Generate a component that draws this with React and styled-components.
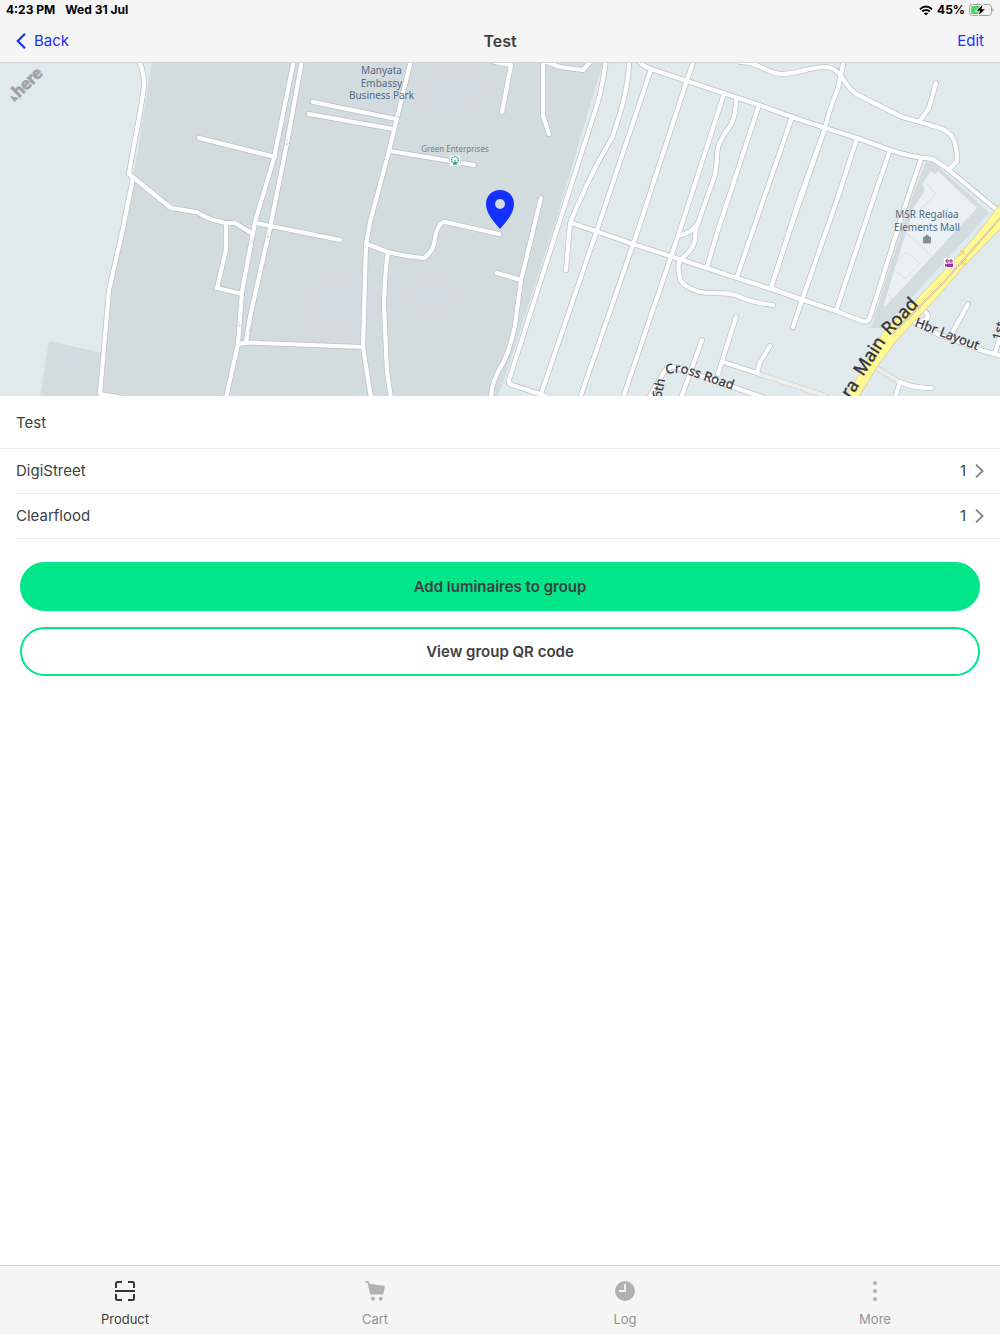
import styled, { createGlobalStyle, css } from "styled-components";

const GlobalStyle = createGlobalStyle`
  * {
    box-sizing: border-box;
  }

  body {
    margin: 0;
    background: #fff;
    color: #3d3f42;
    font-family: Inter, "Liberation Sans", sans-serif;
    font-size: 15px;
    line-height: 20px;
  }

  button {
    margin: 0;
    padding: 0;
    border: 0;
    background: none;
    color: inherit;
    font: inherit;
    cursor: pointer;
  }
`;

const Page = styled.div`
  display: flex;
  flex-direction: column;
  min-height: 100vh;
`;

const Header = styled.header`
  background: #f5f5f5;
  border-bottom: 1px solid #d0d3d4;
`;

const StatusBar = styled.div`
  display: flex;
  justify-content: space-between;
  align-items: center;
  height: 20px;
  padding: 0 6px;
  color: #000;
  font-size: 12px;
  font-weight: 650;
`;

const StatusGroup = styled.div`
  display: flex;
  align-items: center;
  gap: ${(props) => props.$gap}px;
`;

const NavBar = styled.div`
  display: grid;
  grid-template-columns: 1fr auto 1fr;
  align-items: center;
  height: 42px;
  padding: 0 16px;
`;

const NavButton = styled.button`
  display: flex;
  align-items: center;
  gap: 8px;
  justify-self: ${(props) => props.$side};
  color: #1b30f5;
  line-height: 22px;
`;

const Title = styled.h1`
  margin: 0;
  font-size: 16px;
  font-weight: 600;
`;

const MapSvg = styled.svg`
  display: block;
  width: 100%;
  height: auto;
  font-family: "Noto Sans", sans-serif;
`;

const Place = styled.text`
  fill: #526a86;
  font-size: 10px;
  text-anchor: middle;
`;

const PlaceSmall = styled.text`
  fill: #7a7d80;
  font-size: 8px;
  text-anchor: middle;
`;

const Street = styled.text`
  fill: #33333d;
  font-size: ${(props) => (props.$large ? 18 : 13)}px;
  stroke: #33333d;
  stroke-width: ${(props) => (props.$large ? 0.4 : 0.2)};
`;

const HereLogo = styled.text`
  fill: #a1a4a6;
  stroke: #a1a4a6;
  stroke-width: 0.8;
  font-family: Lato, sans-serif;
  font-size: 17px;
  font-weight: 900;
`;

const Main = styled.main`
  flex: 1;
`;

const GroupName = styled.h2`
  margin: 0;
  padding: 17px 16px 15px;
  border-bottom: 1px solid #ececec;
  font-size: 15px;
  font-weight: 400;
`;

const List = styled.ul`
  margin: 0;
  padding: 0 0 0 16px;
  list-style: none;
`;

const Row = styled.button`
  display: flex;
  align-items: center;
  width: 100%;
  height: 45px;
  padding-right: 16px;
  border-bottom: 1px solid #ececec;
  text-align: left;
  line-height: 22px;
`;

const RowLabel = styled.span`
  flex: 1;
`;

const RowCount = styled.span`
  margin-right: 9px;
`;

const Actions = styled.div`
  display: flex;
  flex-direction: column;
  gap: 16px;
  padding: 23px 20px;
`;

const Action = styled.button`
  height: 49px;
  border: 2px solid #00e688;
  border-radius: 25px;
  font-weight: 600;
  ${(props) =>
    props.$filled &&
    css`
      background: #00e688;
    `}
`;

const TabBar = styled.nav`
  display: grid;
  grid-template-columns: repeat(4, 1fr);
  background: #f5f5f5;
  border-top: 1px solid #d0d0d0;
`;

const Tab = styled.a`
  display: flex;
  flex-direction: column;
  align-items: center;
  gap: 8px;
  padding: 14px 0 6px;
  color: ${(props) => (props.$active ? "#3d3f42" : "#949494")};
  font-size: 13px;
  line-height: 18px;
  text-decoration: none;

  svg {
    color: ${(props) => (props.$active ? "#34363c" : "#b1b1b3")};
  }
`;

const roads = [
  "M138 60C142 66 144 76 144 86C141 112 134 142 129 174L171 208L196 212Q205 217 213 220L226 223L235 223L253 234",
  "M133 178L122 233L109 290L100 394L118 397",
  "M199 138L275 157",
  "M294 60L274 158L255 222L252 238L242 292L238 344L226 398",
  "M302 60L287 143L270 228L250 317L246 342",
  "M256 223L340 240",
  "M226 223L226 250L217 288L242 294",
  "M238 344Q246 342 260 343L363 347",
  "M411 60L397 118L389 151L370 222L366 245L363 347L371 398",
  "M313 102L396 119",
  "M309 114L393 129",
  "M390 151L474 165",
  "M367 244L388 252Q408 257 424 258Q432 252 434 244Q437 222 445 222L499 234",
  "M388 252Q385 270 384 305L387 372L391 398",
  "M497 273L521 280",
  "M541 198L521 280L515 325Q510 350 503 363Q491 382 491 398",
  "M495 62L511 65L502 112",
  "M543 60L543 116L549 134",
  "M544 61L560 67L583 70L592 60",
  "M606 60Q603 85 597 105L560 220L509 380Q508 384 512 385L546 396",
  "M629 60C629 90 618 120 612 138C600 158 592 172 572 218L570 224L566 270",
  "M651 69L597 230L541 394",
  "M694 60L687 80L638 230L580 398",
  "M724 94L680 230L623 398",
  "M736 98Q736 118 730 126Q720 140 718 147C716 160 718 164 714 178L699 220Q695 228 695 240Q693 250 680 260Q677 266 680 278Q681 286 700 292C715 295 726 290 743 298Q755 303 773 305",
  "M699 222Q691 234 678 236",
  "M638 60Q642 66 651 69L687 81L759 105L792 117L825 128L857 138L890 150Q910 157 933 159L949 170L998 211",
  "M759 105L718 230L707 267",
  "M792 117L753 230L737 277",
  "M844 60L838 88Q829 110 825 128L799 200L771 288",
  "M771 288L802 300",
  "M825 128L790 230L771 288",
  "M857 138L837 200L802 300L793 327",
  "M890 150L873 200L836 311",
  "M921 159L907 200L870 317Q868 323 862 321L836 311L771 289L740 279L670 256L633 244L572 223",
  "M740 62L750 63C762 66 770 74 782 74C798 74 808 67 826 67Q836 68 842 77Q850 92 862 97L902 117L920 122C936 127 945 128 951 135Q957 143 957 161L949 170",
  "M936 83L929 108L920 121",
  "M702 340L681 398",
  "M736 317L718 374",
  "M723 362L757 373",
  "M770 346L760 362L757 373",
  "M650 396L664 372Q668 364 680 369L762 397",
  "M912 320Q930 333 950 338L980 350L1002 356",
  "M968 304L950 337",
  "M995 353L1002 330",
  "M921 309Q930 313 927 319L919 323",
  "M895 398L900 382Q913 388 932 388",
];

const mutedRoads = ["M759 374L826 396", "M875 367L898 381"];

const oneWayMarks = [
  [287, 142],
  [253, 240],
  [268, 235],
  [239, 324],
  [250, 329],
  [398, 115],
];

function WifiIcon() {
  return (
    <svg width="14" height="11" viewBox="0 0 14 11" fill="none" stroke="#000" strokeWidth="2">
      <path d="M1 4.2Q7 -1.3 13 4.2" />
      <path d="M3.2 6.6Q7 3.3 10.8 6.6" />
      <path d="M7 10.6L4.8 8.3Q7 6.6 9.2 8.3Z" fill="#000" stroke="none" />
    </svg>
  );
}

function BatteryIcon() {
  return (
    <svg width="25" height="12" viewBox="0 0 25 12">
      <rect x=".5" y=".5" width="22" height="11" rx="3" fill="none" stroke="#a3a3a3" />
      <path d="M23.500 4Q26 6 23.500 8Z" fill="#a3a3a3" />
      <path d="M3.5 2H11V10H3.5Q2 10 2 8.500V3.500Q2 2 3.500 2Z" fill="#4cd964" />
      <path
        d="M13.500 1L7.500 6.800H11L9.800 11L16 5.200H12.400Z"
        fill="#000"
        stroke="#f5f5f5"
        strokeWidth="1.600"
        paintOrder="stroke"
      />
    </svg>
  );
}

function Chevron({ left }) {
  return left ? (
    <svg width="10" height="16" viewBox="0 0 10 16" fill="none" stroke="#1b30f5" strokeWidth="2.200">
      <path d="M9 .8L1.800 8L9 15.200" />
    </svg>
  ) : (
    <svg width="9" height="14" viewBox="0 0 9 14" fill="none" stroke="#858588" strokeWidth="1.800">
      <path d="M1 .6L7.600 7L1 13.400" />
    </svg>
  );
}

function ScanIcon() {
  return (
    <svg width="22" height="22" viewBox="0 0 22 22" fill="none" stroke="currentColor" strokeWidth="2">
      <path d="M2 8V3.500Q2 2 3.500 2H8M14 2H18.500Q20 2 20 3.500V8M20 14V18.500Q20 20 18.500 20H14M8 20H3.500Q2 20 2 18.500V14M1 11H21" />
    </svg>
  );
}

function CartIcon() {
  return (
    <svg width="22" height="22" viewBox="0 0 22 22" fill="currentColor">
      <path d="M1 1H4.300L5.400 3.700L21 6L19.200 14.500H6.200L3.500 2.700H1.700Z" />
      <circle cx="9" cy="18.700" r="2" />
      <circle cx="16.700" cy="18.700" r="2" />
    </svg>
  );
}

function ClockIcon() {
  return (
    <svg width="22" height="22" viewBox="0 0 22 22">
      <circle cx="11" cy="11" r="10" fill="currentColor" />
      <path d="M11 4V11H5" fill="none" stroke="#f5f5f5" strokeWidth="1.800" />
    </svg>
  );
}

function MoreIcon() {
  return (
    <svg width="22" height="22" viewBox="0 0 22 22" fill="currentColor">
      <circle cx="11" cy="3" r="2" />
      <circle cx="11" cy="11" r="2" />
      <circle cx="11" cy="19" r="2" />
    </svg>
  );
}

function GroupMap() {
  return (
    <MapSvg viewBox="0 63 1000 333" role="img" aria-label="Map of group location">
      <defs>
        <radialGradient id="tint">
          <stop offset="0" stopColor="#d3dae2" />
          <stop offset="1" stopColor="#d3dae2" stopOpacity="0" />
        </radialGradient>
        <path id="cross-road" d="M667 375Q676 370 692 376L745 394" />
      </defs>

      {/* land */}
      <rect y="63" width="1000" height="333" fill="#e0e9ec" />
      <path d="M152 62H603L553 230L498 397H100L109 290L122 233L133 180Z" fill="#d2dbde" />
      <path d="M49 341L102 353L100 397H40Z" fill="#d2dbde" />
      <ellipse cx="335" cy="305" rx="55" ry="45" fill="url(#tint)" />
      <ellipse cx="430" cy="295" rx="55" ry="30" fill="url(#tint)" />
      <ellipse cx="450" cy="90" rx="55" ry="40" fill="url(#tint)" />
      <ellipse cx="65" cy="365" rx="20" ry="20" fill="url(#tint)" />

      {/* mall */}
      <path d="M926 162L934 163L989 213L884 328L871 328L911 200Z" fill="#d2dbde" />
      <path
        d="M931 171L935 174L938 171L977 208L885 307L884 304L895 268L914 207L925 190L922 184Z"
        fill="#eaf0f3"
      />
      <path
        d="M926 183L936 194L915 215M905 232L933 257M896 263L906 252L920 263L905 279L896 271M888 294L892 299"
        fill="none"
        stroke="#d9e1e5"
      />

      {/* roads */}
      <g fill="none" strokeLinecap="round" strokeLinejoin="round">
        {roads.map((d) => (
          <path key={d} d={d} stroke="#bdc2c1" strokeWidth="5.600" />
        ))}
        {mutedRoads.map((d) => (
          <path key={d} d={d} stroke="#c8cccb" strokeWidth="5.400" />
        ))}
        {mutedRoads.map((d) => (
          <path key={d} d={d} stroke="#edeeea" strokeWidth="4.200" />
        ))}
        {roads.map((d) => (
          <path key={d} d={d} stroke="#fff" strokeWidth="4.200" />
        ))}
      </g>
      {oneWayMarks.map(([x, y]) => (
        <path
          key={`${x}-${y}`}
          d={`M${x} ${y - 3}V${y + 3}M${x - 2} ${y + 1}L${x} ${y + 3}L${x + 2} ${y + 1}`}
          fill="none"
          stroke="#c9c9c9"
          strokeWidth=".6"
        />
      ))}
      <path
        d="M845 398L866 363L883 332Q890 325 913 303L943 272L974 238L1002 202V227L963 267L940 294L897 340L877 367L858 398Z"
        fill="#fff992"
        stroke="#d8c9a4"
        strokeWidth=".8"
      />
      <path d="M892 334L943 283L1002 216" fill="none" stroke="#cdb89a" strokeWidth="1.800" />
      <path d="M892 334L943 283L1002 216" fill="none" stroke="#f3ecd0" strokeWidth=".8" />
      <path
        d="M958 257L963 252M960 251L964 251L964 255M967 259L962 264M962 260V264H966"
        fill="none"
        stroke="#e6c75e"
        strokeWidth=".9"
      />

      {/* labels */}
      <Place x="381.500" y="74">Manyata</Place>
      <Place x="381.500" y="87">Embassy</Place>
      <Place x="381.500" y="99">Business Park</Place>
      <Place x="927" y="218">MSR Regaliaa</Place>
      <Place x="927" y="231">Elements Mall</Place>
      <PlaceSmall x="455" y="152">Green Enterprises</PlaceSmall>
      <Street>
        <textPath href="#cross-road">Cross Road</textPath>
      </Street>
      <Street transform="translate(661 399) rotate(-78)">6th</Street>
      <Street transform="translate(914 326) rotate(21)">Hbr Layout</Street>
      <Street transform="translate(1001 341) rotate(-76)">1st</Street>
      <Street $large transform="translate(850 399) rotate(-56)">ra</Street>
      <Street $large transform="translate(863 377) rotate(-57)">Main</Street>
      <Street $large transform="translate(889 336) rotate(-46)">Road</Street>

      {/* points of interest */}
      <rect x="449.500" y="155" width="11" height="11" rx="1" fill="#f7f9f9" stroke="#cfd8da" strokeWidth=".6" />
      <circle cx="455" cy="160" r="3.400" fill="none" stroke="#23a58b" strokeWidth="1.200" strokeDasharray="1.500 .6" />
      <path d="M454.500 160H455.500V162L457 163V164.800H453V163L454.500 162Z" fill="#23a58b" />
      <path d="M923.500 237H930.500V243H923.500ZM925.500 237Q925.500 235 927 235Q928.500 235 928.500 237" fill="#7d8e9b" stroke="#7d8e9b" strokeWidth=".8" />
      <rect x="943.500" y="257.500" width="11" height="11" rx="1" fill="#fff" stroke="#d9cfe0" strokeWidth=".6" />
      <g fill="#a03498">
        <circle cx="947.200" cy="261" r="1.800" />
        <circle cx="951" cy="261" r="1.800" />
        <path d="M947 263.500H953V267H947ZM945 263.500L947 264.500V266L945 267Z" />
      </g>
      <g fill="#fff">
        <circle cx="947.200" cy="261" r=".6" />
        <circle cx="951" cy="261" r=".6" />
      </g>

      {/* group pin */}
      <path
        fillRule="evenodd"
        d="M500 190C492 190 486 196 486 204C486 214 495 223 500 229C505 223 514 214 514 204C514 196 508 190 500 190ZM500 199A5 5 0 1 1 500 209A5 5 0 1 1 500 199Z"
        fill="#1430ff"
      />
      <HereLogo transform="translate(19 98) rotate(-44)">here</HereLogo>
      <path d="M10 96L19 98L14 102Z" fill="#a1a4a6" />
    </MapSvg>
  );
}

const luminaires = [
  { name: "DigiStreet", count: 1 },
  { name: "Clearflood", count: 1 },
];

const tabs = [
  { name: "Product", Icon: ScanIcon },
  { name: "Cart", Icon: CartIcon },
  { name: "Log", Icon: ClockIcon },
  { name: "More", Icon: MoreIcon },
];

function App() {
  return (
    <Page>
      <GlobalStyle />
      <Header>
        <StatusBar>
          <StatusGroup $gap={10}>
            <span>4:23 PM</span>
            <span>Wed 31 Jul</span>
          </StatusGroup>
          <StatusGroup $gap={4}>
            <WifiIcon />
            <span>45%</span>
            <BatteryIcon />
          </StatusGroup>
        </StatusBar>
        <NavBar>
          <NavButton type="button" $side="start">
            <Chevron left />
            <span>Back</span>
          </NavButton>
          <Title>Test</Title>
          <NavButton type="button" $side="end">
            <span>Edit</span>
          </NavButton>
        </NavBar>
      </Header>

      <GroupMap />

      <Main>
        <GroupName>Test</GroupName>
        <List>
          {luminaires.map((item) => (
            <li key={item.name}>
              <Row type="button">
                <RowLabel>{item.name}</RowLabel>
                <RowCount>{item.count}</RowCount>
                <Chevron />
              </Row>
            </li>
          ))}
        </List>
        <Actions>
          <Action type="button" $filled>
            Add luminaires to group
          </Action>
          <Action type="button">View group QR code</Action>
        </Actions>
      </Main>

      <TabBar>
        {tabs.map(({ name, Icon }) => (
          <Tab key={name} href={`#${name.toLowerCase()}`} $active={name === "Product"}>
            <Icon />
            {name}
          </Tab>
        ))}
      </TabBar>
    </Page>
  );
}

export default App;
